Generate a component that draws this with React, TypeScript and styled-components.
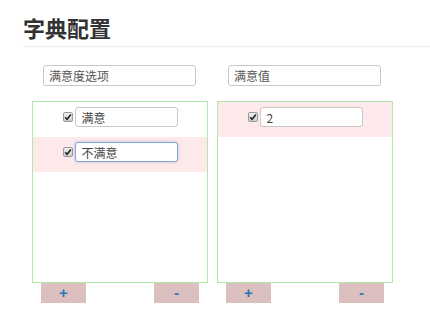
import styled, { createGlobalStyle } from "styled-components";

const GlobalStyle = createGlobalStyle`
  body {
    margin: 0;
    background: #fff;
    font-family: "Liberation Sans", "Noto Sans CJK SC", sans-serif;
  }
`;

type Item = { label: string; active?: boolean; focused?: boolean };

const COLUMNS: { title: string; items: Item[] }[] = [
  {
    title: "满意度选项",
    items: [{ label: "满意" }, { label: "不满意", active: true, focused: true }],
  },
  {
    title: "满意值",
    items: [{ label: "2", active: true }],
  },
];

const CheckMark = () => (
  <CheckBox>
    <svg width="8" height="8" viewBox="0 0 8 8">
      <path d="M1.2 4.2 L3.1 6.2 L6.9 1.6" fill="none" stroke="#222" strokeWidth="1.6" />
    </svg>
  </CheckBox>
);

const App = () => {
  return (
    <>
      <GlobalStyle />
      <Page>
        <Title>字典配置</Title>
        <Columns>
          {COLUMNS.map((col) => (
            <Column key={col.title}>
              <HeadInput defaultValue={col.title} />
              <Panel>
                {col.items.map((item) => (
                  <Row key={item.label} active={item.active}>
                    <CheckMark />
                    <ItemInput defaultValue={item.label} focused={item.focused} />
                  </Row>
                ))}
              </Panel>
              <Buttons>
                <ActionButton>+</ActionButton>
                <ActionButton>-</ActionButton>
              </Buttons>
            </Column>
          ))}
        </Columns>
      </Page>
    </>
  );
};

export default App;

const Page = styled.div`
  padding: 12px 0 0 23px;
`;

const Title = styled.h1`
  margin: 0;
  padding-bottom: 4px;
  border-bottom: 1px solid #eeeeee;
  font-family: "Noto Sans CJK SC", sans-serif;
  font-size: 22px;
  line-height: 30px;
  font-weight: 700;
  color: #333;
`;

const Columns = styled.div`
  display: flex;
  gap: 9px;
  margin-left: 9px;
  padding-top: 18px;
`;

const Column = styled.div`
  width: 176px;
  display: flex;
  flex-direction: column;
`;

const HeadInput = styled.input`
  box-sizing: border-box;
  width: 153px;
  height: 21px;
  margin: 0 0 15px 11px;
  padding: 0 5px;
  border: 1px solid #c8c8c8;
  border-radius: 3px;
  font-family: "Noto Sans CJK SC", sans-serif;
  font-size: 12px;
  color: #555;
  outline: none;
`;

const Panel = styled.div`
  box-sizing: border-box;
  height: 182px;
  border: 1px solid #aee8ae;
`;

const Row = styled.div<{ active?: boolean }>`
  display: flex;
  align-items: center;
  justify-content: center;
  gap: 2px;
  padding: 5px 0 10px;
  background: ${(p) => (p.active ? "#fde9e9" : "transparent")};
`;

const CheckBox = styled.span`
  box-sizing: border-box;
  width: 10px;
  height: 10px;
  display: flex;
  align-items: center;
  justify-content: center;
  border: 1px solid #9a9a9a;
  border-radius: 2px;
  background: linear-gradient(#f0f0f0, #cfcfcf);
`;

const ItemInput = styled.input<{ focused?: boolean }>`
  box-sizing: border-box;
  width: 103px;
  height: 20px;
  padding: 0 6px;
  border: 1px solid ${(p) => (p.focused ? "#7fa8d8" : "#c8c8c8")};
  border-radius: 3px;
  box-shadow: ${(p) => (p.focused ? "0 0 3px rgba(102,150,220,0.5)" : "none")};
  background: #fff;
  font-family: "Noto Sans CJK SC", sans-serif;
  font-size: 12px;
  color: #444;
  outline: none;
`;

const Buttons = styled.div`
  display: flex;
  justify-content: space-between;
  padding: 0 9px;
`;

const ActionButton = styled.button`
  width: 45px;
  height: 20px;
  padding: 0;
  border: none;
  background: #dcc0c0;
  color: #2a75b5;
  font-family: "Liberation Sans", sans-serif;
  font-size: 15px;
  font-weight: 700;
  line-height: 20px;
  cursor: pointer;
`;
